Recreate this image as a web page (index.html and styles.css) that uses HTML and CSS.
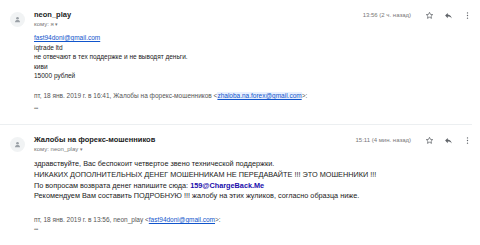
FILE: index.html
```html
<!DOCTYPE html>
<html lang="ru">
<head>
    <meta charset="UTF-8">
    <title>Переписка</title>
    <link rel="stylesheet" href="styles.css">
</head>
<body>
    <div class="thread">
        <div class="message first">
            <div class="avatar">
                <svg viewBox="0 0 16 16" width="15" height="15"><circle cx="8" cy="8" r="8" fill="#f1f3f4"/><circle cx="8" cy="6.6" r="1.4" fill="#9aa0a6"/><path d="M5.3 10.8c0-1.5 1.3-2.2 2.7-2.2s2.7.7 2.7 2.2z" fill="#9aa0a6"/></svg>
            </div>
            <div class="content">
                <div class="header">
                    <div class="who">
                        <div class="name">neon_play</div>
                        <div class="to">кому: я <span class="caret">▾</span></div>
                    </div>
                    <div class="meta">
                        <span class="time">13:56 (2 ч. назад)</span>
                        <svg class="icon" viewBox="0 0 24 24" width="9" height="9"><path d="M12 3.5l2.6 5.5 6 .6-4.5 4.1 1.3 5.9L12 16.6l-5.4 3 1.3-5.9-4.5-4.1 6-.6z" fill="none" stroke="#5f6368" stroke-width="2"/></svg>
                        <svg class="icon" viewBox="0 0 24 24" width="9" height="9"><path d="M10 9V5l-7 7 7 7v-4.1c5 0 8.5 1.6 11 5.1-1-5-4-10-11-11z" fill="#5f6368"/></svg>
                        <svg class="icon dots" viewBox="0 0 24 24" width="9" height="9"><circle cx="12" cy="5" r="1.8" fill="#5f6368"/><circle cx="12" cy="12" r="1.8" fill="#5f6368"/><circle cx="12" cy="19" r="1.8" fill="#5f6368"/></svg>
                    </div>
                </div>
                <div class="body small">
                    <a href="#">fast94doni@gmail.com</a><br>
                    iqtrade ltd<br>
                    не отвечают в тех поддержке и не выводят деньги.<br>
                    киви<br>
                    15000 рублей
                </div>
                <div class="quote">пт, 18 янв. 2019 г. в 16:41, Жалобы на форекс-мошенников &lt;<a href="#" class="hl">zhaloba.na.forex@gmail.com</a>&gt;:</div>
                <div class="more">•••</div>
            </div>
        </div>

        <div class="message second">
            <div class="avatar">
                <svg viewBox="0 0 16 16" width="15" height="15"><circle cx="8" cy="8" r="8" fill="#f1f3f4"/><circle cx="8" cy="6.6" r="1.4" fill="#9aa0a6"/><path d="M5.3 10.8c0-1.5 1.3-2.2 2.7-2.2s2.7.7 2.7 2.2z" fill="#9aa0a6"/></svg>
            </div>
            <div class="content">
                <div class="header">
                    <div class="who">
                        <div class="name">Жалобы на форекс-мошенников</div>
                        <div class="to">кому: neon_play <span class="caret">▾</span></div>
                    </div>
                    <div class="meta">
                        <span class="time">15:11 (4 мин. назад)</span>
                        <svg class="icon" viewBox="0 0 24 24" width="9" height="9"><path d="M12 3.5l2.6 5.5 6 .6-4.5 4.1 1.3 5.9L12 16.6l-5.4 3 1.3-5.9-4.5-4.1 6-.6z" fill="none" stroke="#5f6368" stroke-width="2"/></svg>
                        <svg class="icon" viewBox="0 0 24 24" width="9" height="9"><path d="M10 9V5l-7 7 7 7v-4.1c5 0 8.5 1.6 11 5.1-1-5-4-10-11-11z" fill="#5f6368"/></svg>
                        <svg class="icon dots" viewBox="0 0 24 24" width="9" height="9"><circle cx="12" cy="5" r="1.8" fill="#5f6368"/><circle cx="12" cy="12" r="1.8" fill="#5f6368"/><circle cx="12" cy="19" r="1.8" fill="#5f6368"/></svg>
                    </div>
                </div>
                <div class="body large">
                    здравствуйте, Вас беспокоит четвертое звено технической поддержки.<br>
                    НИКАКИХ ДОПОЛНИТЕЛЬНЫХ ДЕНЕГ МОШЕННИКАМ НЕ ПЕРЕДАВАЙТЕ !!! ЭТО МОШЕННИКИ !!!<br>
                    По вопросам возврата денег напишите сюда: <b class="contact">159@ChargeBack.Me</b><br>
                    Рекомендуем Вам составить ПОДРОБНУЮ !!! жалобу на этих жуликов, согласно образца ниже.
                </div>
                <div class="quote">пт, 18 янв. 2019 г. в 13:56, neon_play &lt;<a href="#">fast94doni@gmail.com</a>&gt;:</div>
                <div class="more">•••</div>
            </div>
        </div>
    </div>
</body>
</html>
```

FILE: styles.css
```css
body {
    margin: 0;
    background: #fff;
    font-family: "Liberation Sans", Arial, sans-serif;
    color: #222;
}

.thread {
    width: 472px;
}

.message {
    display: flex;
    padding: 10px 0 0 10px;
}

.message.first {
    height: 114px;
    border-bottom: 1px solid #eceff1;
}

.avatar {
    width: 24px;
    padding-top: 2px;
}

.avatar svg {
    display: block;
}

.content {
    flex: 1;
}

.header {
    display: flex;
    justify-content: space-between;
    align-items: flex-start;
}

.name {
    font-size: 7.5px;
    font-weight: bold;
    line-height: 10px;
}

.to {
    font-size: 6px;
    color: #777;
    line-height: 9px;
}

.caret {
    font-size: 5px;
}

.meta {
    display: flex;
    align-items: center;
    gap: 10px;
    height: 10px;
}

.time {
    font-size: 6px;
    color: #777;
    margin-right: 4px;
}

.icon {
    display: block;
}

.body.small {
    font-size: 6.5px;
    line-height: 9.6px;
    margin-top: 4px;
}

.body.large {
    font-size: 7.3px;
    line-height: 10.8px;
    margin-top: 5px;
}

a {
    color: #15c;
}

.hl {
    background: #e8f0fe;
}

.contact {
    color: #1a0dab;
}

.quote {
    font-size: 6.5px;
    color: #555;
    margin-top: 11px;
}

.second .quote {
    margin-top: 14px;
}

.more {
    font-size: 5px;
    color: #888;
    letter-spacing: -0.5px;
    margin-top: 6px;
}

.second .more {
    margin-top: 3px;
}
```
